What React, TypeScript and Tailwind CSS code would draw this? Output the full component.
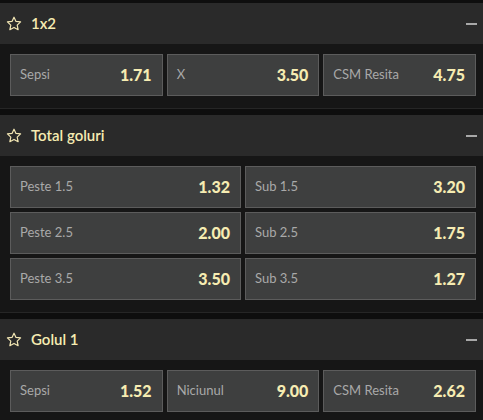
import React from "react";

const Star = () => (
  <svg width="16" height="16" viewBox="0 0 24 24" fill="none" stroke="#f3e7b4" strokeWidth="1.8" strokeLinejoin="round">
    <path d="M12 1.8l3 6.3 6.9.8-5.1 4.8 1.4 6.9L12 17.2l-6.2 3.4 1.4-6.9-5.1-4.8 6.9-.8z" />
  </svg>
);

type Odd = { label: string; value: string };

const OddButton = ({ o }: { o: Odd }) => (
  <div className="h-[42px] flex items-center justify-between bg-[#3e3f3f] border border-[#5c5c5c] pl-[9px] pr-[10px]">
    <span className="text-[13px] text-[#a9a9a9]">{o.label}</span>
    <span className="text-[16px] font-black text-[#f6ecb2]">{o.value}</span>
  </div>
);

const Section = ({ title, cols, odds }: { title: string; cols: 2 | 3; odds: Odd[] }) => (
  <div className="flex flex-col">
    <div className="h-[41px] bg-[#2a2a2a] flex items-center pl-[6px] pr-[6px]">
      <Star />
      <span className="ml-[9px] text-[15px] font-semibold text-[#f6ecb2]">{title}</span>
      <div className="ml-auto w-[11px] h-[2px] bg-[#a8a8a8]" />
    </div>
    <div className="bg-[#161616] pt-[10px] pb-[12px] pl-[10px] pr-[7px] border-b border-[#262626]">
      <div className={cols === 3 ? "grid grid-cols-3 gap-1" : "grid grid-cols-2 gap-1"}>
        {odds.map((o, i) => (
          <OddButton key={i} o={o} />
        ))}
      </div>
    </div>
  </div>
);

export default function App() {
  return (
    <div
      className="w-[483px] h-[420px] overflow-hidden bg-[#0e0e0e] pt-[3px] flex flex-col gap-[6px]"
      style={{ fontFamily: "Lato, 'Open Sans', sans-serif" }}
    >
      <Section
        title="1x2"
        cols={3}
        odds={[
          { label: "Sepsi", value: "1.71" },
          { label: "X", value: "3.50" },
          { label: "CSM Resita", value: "4.75" },
        ]}
      />
      <Section
        title="Total goluri"
        cols={2}
        odds={[
          { label: "Peste 1.5", value: "1.32" },
          { label: "Sub 1.5", value: "3.20" },
          { label: "Peste 2.5", value: "2.00" },
          { label: "Sub 2.5", value: "1.75" },
          { label: "Peste 3.5", value: "3.50" },
          { label: "Sub 3.5", value: "1.27" },
        ]}
      />
      <Section
        title="Golul 1"
        cols={3}
        odds={[
          { label: "Sepsi", value: "1.52" },
          { label: "Niciunul", value: "9.00" },
          { label: "CSM Resita", value: "2.62" },
        ]}
      />
    </div>
  );
}
